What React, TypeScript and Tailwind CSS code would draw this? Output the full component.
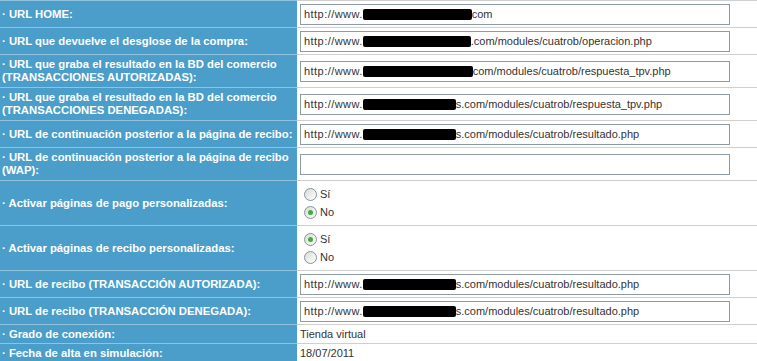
import React from 'react';

type Url = { hidden: number; rest: string };

interface RowProps {
  label: React.ReactNode;
  height: string;
  children?: React.ReactNode;
}

const Row = ({ label, height, children }: RowProps) => (
  <div className={`grid grid-cols-[297px_1fr] ${height}`}>
    <div className="flex items-center border-t border-[#8fc3df] bg-[#4b9ec9] pl-[2px] text-[11.3px] font-bold leading-[13px] text-white">
      <div>{label}</div>
    </div>
    <div className="flex items-center border-t border-[#cfcfcf] pl-[3px]">{children}</div>
  </div>
);

const UrlInput = ({ url }: { url?: Url }) => (
  <div className="flex h-[21px] w-[430px] items-center border border-[#8e9aa4] bg-white pl-[3px] text-[11px] text-[#333]">
    {url && (
      <>
        <span className="tracking-[0.45px]">http://www.</span>
        <span className="mt-[1px] inline-block h-[11px] rounded-[2px] bg-black" style={{ width: url.hidden }} />
        <span>{url.rest}</span>
      </>
    )}
  </div>
);

const Radio = ({ checked, label }: { checked?: boolean; label: string }) => (
  <div className="flex h-[18px] items-center gap-[3px]">
    <span className="flex h-[13px] w-[13px] items-center justify-center rounded-full border border-[#8593a1] bg-gradient-to-br from-[#dcdcd4] to-white">
      {checked && <span className="h-[5px] w-[5px] rounded-full bg-[#3fae3f]" />}
    </span>
    <span className="text-[11px] text-[#333]">{label}</span>
  </div>
);

const App = () => {
  return (
    <div className="h-[361px] w-[757px] overflow-hidden bg-white" style={{ fontFamily: '"Liberation Sans", Arial, sans-serif' }}>
      <Row label="· URL HOME:" height="h-[27px]">
        <UrlInput url={{ hidden: 109, rest: 'com' }} />
      </Row>
      <Row label="· URL que devuelve el desglose de la compra:" height="h-[27px]">
        <UrlInput url={{ hidden: 108, rest: '.com/modules/cuatrob/operacion.php' }} />
      </Row>
      <Row
        label={<>· URL que graba el resultado en la BD del comercio<br />(TRANSACCIONES AUTORIZADAS):</>}
        height="h-[33px]"
      >
        <UrlInput url={{ hidden: 110, rest: 'com/modules/cuatrob/respuesta_tpv.php' }} />
      </Row>
      <Row
        label={<>· URL que graba el resultado en la BD del comercio<br />(TRANSACCIONES DENEGADAS):</>}
        height="h-[33px]"
      >
        <UrlInput url={{ hidden: 93, rest: 's.com/modules/cuatrob/respuesta_tpv.php' }} />
      </Row>
      <Row label="· URL de continuación posterior a la página de recibo:" height="h-[27px]">
        <UrlInput url={{ hidden: 93, rest: 's.com/modules/cuatrob/resultado.php' }} />
      </Row>
      <Row label={<>· URL de continuación posterior a la página de recibo<br />(WAP):</>} height="h-[33px]">
        <UrlInput />
      </Row>
      <Row label="· Activar páginas de pago personalizadas:" height="h-[45px]">
        <div className="flex flex-col pl-[4px]">
          <Radio label="Sí" />
          <Radio label="No" checked />
        </div>
      </Row>
      <Row label="· Activar páginas de recibo personalizadas:" height="h-[45px]">
        <div className="flex flex-col pl-[4px]">
          <Radio label="Sí" checked />
          <Radio label="No" />
        </div>
      </Row>
      <Row label="· URL de recibo (TRANSACCIÓN AUTORIZADA):" height="h-[27px]">
        <UrlInput url={{ hidden: 93, rest: 's.com/modules/cuatrob/resultado.php' }} />
      </Row>
      <Row label="· URL de recibo (TRANSACCIÓN DENEGADA):" height="h-[27px]">
        <UrlInput url={{ hidden: 93, rest: 's.com/modules/cuatrob/resultado.php' }} />
      </Row>
      <Row label="· Grado de conexión:" height="h-[19px]">
        <span className="text-[11px] text-[#333]">Tienda virtual</span>
      </Row>
      <Row label="· Fecha de alta en simulación:" height="h-[19px]">
        <span className="text-[11px] text-[#333]">18/07/2011</span>
      </Row>
    </div>
  );
};

export default App;
